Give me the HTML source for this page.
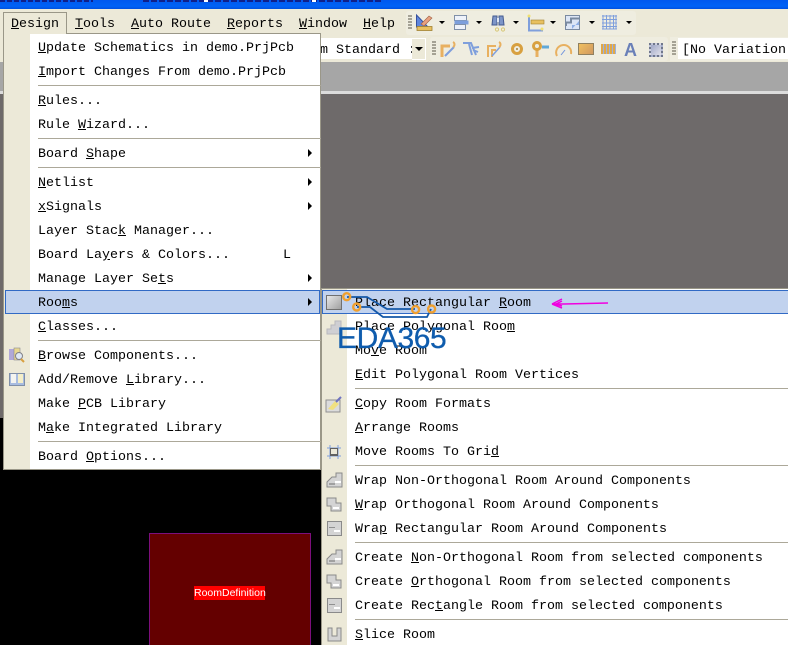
<!DOCTYPE html>
<html><head><meta charset="utf-8"><style>
html,body{margin:0;padding:0;background:#000}
#p{position:relative;width:788px;height:645px;overflow:hidden;background:#000;font-family:"Liberation Mono",monospace;font-size:13.33px;color:#000}
#p div{position:absolute}
.t{white-space:pre;height:24px;line-height:24px;margin-top:2px}
.s{height:1px;background:#aca899}
.a{width:0;height:0;border-top:4px solid transparent;border-bottom:4px solid transparent;border-left:4px solid #000}
.d{width:0;height:0;border-left:3px solid transparent;border-right:3px solid transparent;border-top:3px solid #000}
.g{width:4px;background:repeating-linear-gradient(#a5a295 0 2px,transparent 2px 3px)}
svg{position:absolute;overflow:visible}
</style></head><body><div id="p">
<!-- title -->
<div style="left:0;top:0;width:788px;height:9px;background:linear-gradient(#0058ee,#0062f6 70%,#0050e0)"></div>
<div style="left:0;top:0;width:93px;height:2px;background:repeating-linear-gradient(90deg,#10208a 0 5px,transparent 5px 7px)"></div>
<div style="left:143px;top:0;width:238px;height:2px;background:repeating-linear-gradient(90deg,#10208a 0 6px,transparent 6px 8px)"></div>
<div style="left:204px;top:0;width:4px;height:2px;background:#fff"></div>
<div style="left:312px;top:0;width:4px;height:2px;background:#fff"></div>
<!-- bars -->
<div style="left:0;top:9px;width:788px;height:53px;background:#ece9d8"></div>
<div style="left:406px;top:11px;width:230px;height:24px;background:#efede0;border-radius:3px"></div>
<div style="left:430px;top:37px;width:238px;height:24px;background:#efede0;border-radius:3px"></div>
<div style="left:670px;top:37px;width:118px;height:24px;background:#efede0"></div>
<div style="left:0;top:62px;width:788px;height:29px;background:#a6a6a6"></div>
<div style="left:0;top:91px;width:788px;height:3px;background:#dcdcdc"></div>
<div style="left:0;top:94px;width:788px;height:324px;background:#6e6a6a"></div>
<!-- menu bar text -->
<div class="t" style="left:75px;top:11px"><u>T</u>ools</div>
<div class="t" style="left:131px;top:11px"><u>A</u>uto Route</div>
<div class="t" style="left:227px;top:11px"><u>R</u>eports</div>
<div class="t" style="left:299px;top:11px"><u>W</u>indow</div>
<div class="t" style="left:363px;top:11px"><u>H</u>elp</div>
<!-- toolbar 1 -->
<div class="g" style="left:408px;top:15px;height:15px"></div>
<svg style="left:415px;top:14px" width="20" height="17" viewBox="0 0 20 17"><path d="M1.500 1V13H13Z" fill="#5f86dc" stroke="#34509e"/><path d="M6 10L14 2l3 2-8 8z" fill="#e8a080" stroke="#a06040" stroke-width=".6"/><rect x="2" y="12.500" width="15" height="4" fill="#e8c060" stroke="#a08030" stroke-width=".8"/></svg>
<div class="d" style="left:439px;top:21px"></div>
<svg style="left:454px;top:15px" width="16" height="15"><rect x=".5" y=".5" width="12" height="5" fill="#eef2fa" stroke="#8090a8"/><rect x=".5" y="5.500" width="14" height="4" fill="#7d9fdc"/><rect x=".5" y="9.500" width="11" height="5" fill="#eef2fa" stroke="#8090a8"/></svg>
<div class="d" style="left:476px;top:21px"></div>
<svg style="left:491px;top:14px" width="17" height="18"><path d="M2 2h4v9H1zM8 2h4l1 9H8z" fill="#7d95c8" stroke="#445a90"/><rect x="6" y="4" width="2" height="4" fill="#dfe6f4"/><circle cx="6" cy="15.500" r="1.600" fill="none" stroke="#d8c878"/><circle cx="12" cy="15.500" r="1.600" fill="none" stroke="#d8c878"/></svg>
<div class="d" style="left:513px;top:21px"></div>
<svg style="left:527px;top:14px" width="18" height="18"><path d="M2 2V16.500H16" fill="none" stroke="#7f9fdc" stroke-width="2"/><rect x="4" y="6" width="13" height="4" fill="#e8c060" stroke="#a08030" stroke-width=".6"/><circle cx="2" cy="2" r="1.500" fill="#f0e070"/><circle cx="15" cy="15" r="1.500" fill="#f0e070"/></svg>
<div class="d" style="left:550px;top:21px"></div>
<svg style="left:565px;top:15px" width="15" height="16"><rect x=".5" y=".5" width="14" height="14" fill="#dde6f6" stroke="#7a8aa0"/><path d="M1 11V7.500h5V3.500h8" fill="none" stroke="#7a8aa0" stroke-width="2"/><path d="M7 14V10h7V6" fill="#8fafe5"/></svg>
<div class="d" style="left:589px;top:21px"></div>
<svg style="left:602px;top:15px" width="15" height="15"><path d="M1 0V14M4.500 0V14M8 0V14M11.500 0V14M14 0V14M0 1H15M0 4.500H15M0 8H15M0 11.500H15M0 14H15" stroke="#7f9fdc" fill="none"/></svg>
<div class="d" style="left:626px;top:21px"></div>
<!-- toolbar 2 -->
<div style="left:321px;top:38px;width:91px;height:21px;background:#fff"></div>
<div class="t" style="left:320px;top:37px;width:92px">m Standard :</div>
<div style="left:412px;top:38px;width:13px;height:20px;background:#ece9d8;border:1px solid #fff;border-left:0"></div>
<div class="d" style="left:416px;top:47px;border-left-width:4px;border-right-width:4px;border-top-width:4px;margin-left:-1px"></div>
<div class="g" style="left:432px;top:41px;height:15px"></div>
<svg style="left:440px;top:41px" width="16" height="17"><path d="M2 16V5h8" fill="none" stroke="#e8b060" stroke-width="3"/><path d="M5 15L14 6" stroke="#7f9fdc" stroke-width="2"/><path d="M13 1c2 1 2 4 0 5" fill="none" stroke="#e8b060" stroke-width="2"/></svg>
<svg style="left:463px;top:41px" width="16" height="16"><path d="M0 2H8L13 14M6 3L9 14M9 7L16 6M10 9L15 11" fill="none" stroke="#7f9fdc" stroke-width="2"/></svg>
<svg style="left:486px;top:41px" width="16" height="17"><path d="M2 16V5h8M6 16V9h4" fill="none" stroke="#e8b060" stroke-width="2"/><path d="M6 15L14 6" stroke="#7f9fdc" stroke-width="1.500"/><path d="M13 1c2 1 2 4 0 5" fill="none" stroke="#e8b060" stroke-width="2"/></svg>
<svg style="left:510px;top:42px" width="14" height="14"><circle cx="7" cy="7" r="4.500" fill="none" stroke="#d8a040" stroke-width="3"/><circle cx="7" cy="7" r="1" fill="#a08040"/></svg>
<svg style="left:531px;top:41px" width="18" height="17"><path d="M11 6H18" stroke="#60a8d8" stroke-width="3"/><path d="M6 9V16" stroke="#e8b060" stroke-width="3"/><circle cx="6" cy="5" r="3.500" fill="none" stroke="#d8a040" stroke-width="3"/></svg>
<svg style="left:555px;top:42px" width="18" height="15"><path d="M2 14A7.500 7.500 0 1 1 16 12" fill="none" stroke="#e8b060" stroke-width="2"/><path d="M6 13L10 8" stroke="#6f93dd"/></svg>
<div style="left:578px;top:43px;width:14px;height:10px;background:linear-gradient(135deg,#f0c060,#d09860);border:1px solid #908060"></div>
<div style="left:601px;top:44px;width:15px;height:10px;background:repeating-linear-gradient(90deg,#e0a848 0 2px,#9ab0e0 2px 3px)"></div>
<div style="left:624px;top:39px;font:bold 18px 'Liberation Sans',sans-serif;line-height:22px;color:#6a80b8">A</div>
<div style="left:649px;top:43px;width:10px;height:10px;background:linear-gradient(135deg,#a0a8c8,#e0e0e8);border:2px dotted #70788c"></div>
<div class="g" style="left:672px;top:41px;height:15px"></div>
<div style="left:678px;top:38px;width:110px;height:21px;background:#fff"></div>
<div class="t" style="left:682px;top:37px">[No Variation</div>
<!-- lower canvas -->
<div style="left:149px;top:533px;width:160px;height:112px;background:#640000;border:1px solid #7c0f7c;border-bottom:0"></div>
<div style="left:194px;top:586px;width:71px;height:14px;background:#f00;color:#fff;font:10.5px/14px 'Liberation Sans',sans-serif;text-align:center;white-space:pre">RoomDefinition</div>
<!-- main menu -->
<div style="left:66px;top:33px;width:255px;height:1px;background:#9a9788"></div>
<div style="left:3px;top:12px;width:62px;height:22px;background:#ece9d8;border:1px solid #9a9788;border-bottom:0"></div>
<div class="t" style="left:11px;top:11px;height:24px"><u>D</u>esign</div>
<div style="left:3px;top:34px;width:318px;height:436px;background:#fff;border:solid #9a9788;border-width:0 1px 1px 1px;box-sizing:border-box"></div>
<div style="left:4px;top:34px;width:26px;height:435px;background:#ece9d8"></div>
<div class="t" style="left:38px;top:35px"><u>U</u>pdate Schematics in demo.PrjPcb</div>
<div class="t" style="left:38px;top:59px"><u>I</u>mport Changes From demo.PrjPcb</div>
<div class="s" style="left:38px;top:85px;width:283px"></div>
<div class="t" style="left:38px;top:88px"><u>R</u>ules...</div>
<div class="t" style="left:38px;top:112px">Rule <u>W</u>izard...</div>
<div class="s" style="left:38px;top:138px;width:283px"></div>
<div class="t" style="left:38px;top:141px">Board <u>S</u>hape</div>
<div class="s" style="left:38px;top:167px;width:283px"></div>
<div class="t" style="left:38px;top:170px"><u>N</u>etlist</div>
<div class="t" style="left:38px;top:194px"><u>x</u>Signals</div>
<div class="t" style="left:38px;top:218px">Layer Stac<u>k</u> Manager...</div>
<div class="t" style="left:38px;top:242px">Board La<u>y</u>ers &amp; Colors...</div>
<div class="t" style="left:283px;top:242px">L</div>
<div class="t" style="left:38px;top:266px">Manage Layer Se<u>t</u>s</div>
<div class="a" style="left:308px;top:149px"></div>
<div class="a" style="left:308px;top:178px"></div>
<div class="a" style="left:308px;top:202px"></div>
<div class="a" style="left:308px;top:274px"></div>
<div style="left:5px;top:290px;width:315px;height:24px;background:#c1d2ee;border:1px solid #316ac5;box-sizing:border-box"></div>
<div class="t" style="left:38px;top:290px">Roo<u>m</u>s</div>
<div class="a" style="left:308px;top:298px"></div>
<div class="t" style="left:38px;top:314px"><u>C</u>lasses...</div>
<div class="s" style="left:38px;top:340px;width:283px"></div>
<div class="t" style="left:38px;top:343px"><u>B</u>rowse Components...</div>
<div class="t" style="left:38px;top:367px">Add/Remove <u>L</u>ibrary...</div>
<div class="t" style="left:38px;top:391px">Make <u>P</u>CB Library</div>
<div class="t" style="left:38px;top:415px">M<u>a</u>ke Integrated Library</div>
<div class="s" style="left:38px;top:441px;width:283px"></div>
<div class="t" style="left:38px;top:444px">Board <u>O</u>ptions...</div>
<svg style="left:9px;top:347px" width="16" height="16"><rect x="0" y="2" width="5" height="11" fill="#b0a8d8"/><rect x="5" y="1" width="6" height="12" fill="#e8d890" stroke="#8a8a90" stroke-width=".6"/><circle cx="10" cy="9" r="3.500" fill="#dfe8f4" stroke="#808088"/><path d="M12 12l3 3" stroke="#d8a040" stroke-width="2"/></svg>
<svg style="left:9px;top:373px" width="16" height="13"><rect x=".5" y=".5" width="15" height="12" fill="#a8bce0" stroke="#7f8fa8"/><rect x="2" y="1" width="5" height="9" fill="#f4f4f0"/><rect x="9" y="1" width="5" height="9" fill="#f4eec8"/></svg>
<!-- submenu -->
<div style="left:321px;top:288px;width:467px;height:357px;background:#fff;border:solid #9a9788;border-width:1px 0 0 1px;box-sizing:border-box"></div>
<div style="left:322px;top:289px;width:25px;height:356px;background:#ece9d8"></div>
<div style="left:322px;top:290px;width:466px;height:24px;background:#c1d2ee;border:1px solid #316ac5;border-right:0;box-sizing:border-box"></div>
<div style="left:326px;top:295px;width:14px;height:13px;background:linear-gradient(135deg,#e8e8e8,#a0a0a0);border:1px solid #707070"></div>
<div class="t" style="left:355px;top:290px">Place Rectangular <u>R</u>oom</div>
<div class="t" style="left:355px;top:314px">Place Polygonal Roo<u>m</u></div>
<div class="t" style="left:355px;top:338px">Mo<u>v</u>e Room</div>
<div class="t" style="left:355px;top:362px"><u>E</u>dit Polygonal Room Vertices</div>
<div class="s" style="left:355px;top:388px;width:433px"></div>
<div class="t" style="left:355px;top:391px"><u>C</u>opy Room Formats</div>
<div class="t" style="left:355px;top:415px"><u>A</u>rrange Rooms</div>
<div class="t" style="left:355px;top:439px">Move Rooms To Gri<u>d</u></div>
<div class="s" style="left:355px;top:465px;width:433px"></div>
<div class="t" style="left:355px;top:468px">Wrap Non-Ortho<u>g</u>onal Room Around Components</div>
<div class="t" style="left:355px;top:492px"><u>W</u>rap Orthogonal Room Around Components</div>
<div class="t" style="left:355px;top:516px">Wra<u>p</u> Rectangular Room Around Components</div>
<div class="s" style="left:355px;top:542px;width:433px"></div>
<div class="t" style="left:355px;top:545px">Create <u>N</u>on-Orthogonal Room from selected components</div>
<div class="t" style="left:355px;top:569px">Create <u>O</u>rthogonal Room from selected components</div>
<div class="t" style="left:355px;top:593px">Create Rec<u>t</u>angle Room from selected components</div>
<div class="s" style="left:355px;top:619px;width:433px"></div>
<div class="t" style="left:355px;top:622px"><u>S</u>lice Room</div>
<!-- submenu icons -->
<svg style="left:326px;top:319px" width="16" height="16"><path d="M1 15V10H5V6H9V2H15V15Z" fill="#cfcfd3" stroke="#b8b8bc"/></svg>
<svg style="left:325px;top:397px" width="18" height="16"><rect x="1" y="3" width="14" height="12" fill="#dcdcdc" stroke="#909090"/><path d="M3 12L10 4l4 3-6 6z" fill="#f0e080"/><path d="M11 5L16 0" stroke="#6f73c0" stroke-width="2"/></svg>
<svg style="left:327px;top:445px" width="14" height="14"><path d="M3 0V14M11 0V14M0 3H14M0 11H14" stroke="#7f9fdc"/><rect x="3.500" y="3.500" width="7" height="7" fill="none" stroke="#606060"/><rect x="4" y="9" width="6" height="2" fill="#606060"/></svg>
<svg style="left:326px;top:472px" width="17" height="16"><path d="M1 15V10L6 5H10V1H16V15Z" fill="#d4d4d4" stroke="#8a8a8a"/><rect x="9" y="9" width="6" height="2" fill="#fff"/><rect x="3" y="11" width="6" height="2" fill="#a0a0a0"/></svg>
<svg style="left:326px;top:497px" width="16" height="15"><path d="M1 1H10V6H15V14H5V9H1Z" fill="#d4d4d4" stroke="#8a8a8a"/><rect x="7" y="10" width="6" height="2" fill="#fff"/></svg>
<svg style="left:327px;top:521px" width="15" height="15"><rect x=".5" y=".5" width="14" height="14" fill="#d4d4d4" stroke="#8a8a8a"/><rect x="7" y="9" width="6" height="2" fill="#fff"/><rect x="2" y="6" width="6" height="1" fill="#909090"/></svg>
<svg style="left:326px;top:549px" width="17" height="16"><path d="M1 15V10L6 5H10V1H16V15Z" fill="#d4d4d4" stroke="#8a8a8a"/><rect x="9" y="9" width="6" height="2" fill="#fff"/><rect x="3" y="11" width="6" height="2" fill="#a0a0a0"/></svg>
<svg style="left:326px;top:574px" width="16" height="15"><path d="M1 1H10V6H15V14H5V9H1Z" fill="#d4d4d4" stroke="#8a8a8a"/><rect x="7" y="10" width="6" height="2" fill="#fff"/></svg>
<svg style="left:327px;top:598px" width="15" height="15"><rect x=".5" y=".5" width="14" height="14" fill="#d4d4d4" stroke="#8a8a8a"/><rect x="7" y="9" width="6" height="2" fill="#fff"/><rect x="2" y="6" width="6" height="1" fill="#909090"/></svg>
<svg style="left:327px;top:627px" width="15" height="15"><path d="M1 1H5V9H10V1H14V14H1Z" fill="#d4d4d4" stroke="#8a8a8a"/></svg>
<!-- magenta arrow -->
<svg style="left:550px;top:297px" width="60" height="14"><path d="M3 7H14L58 6" fill="none" stroke="#f000e0" stroke-width="1.500"/><path d="M2 7L12 2M2 7L12 11M6 7L12 4M6 7L12 9" fill="none" stroke="#f000e0" stroke-width="1.500"/></svg>
<!-- watermark -->
<svg style="left:340px;top:292px" width="100" height="30" viewBox="0 0 100 30"><path d="M7 5H27L47 17H75M17 15H30L43 25H87L91 17" fill="none" stroke="#1458a8" stroke-width="1.800"/><g fill="none" stroke="#f0a030" stroke-width="2.400"><circle cx="6.700" cy="4.700" r="3.500"/><circle cx="16.700" cy="15" r="3.500"/><circle cx="75.600" cy="17.600" r="3.500"/><circle cx="91.600" cy="17" r="3.500"/></g></svg>
<div style="left:337px;top:322px;font:30px/34px 'Liberation Sans',sans-serif;color:#0f5cad;letter-spacing:-.4px;-webkit-text-stroke:.3px #0f5cad;white-space:pre">EDA365</div>
</div></body></html>
